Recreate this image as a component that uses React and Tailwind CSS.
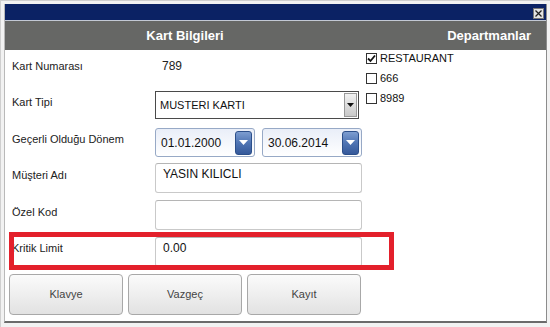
const departments = [
  { name: 'RESTAURANT', checked: true },
  { name: '666', checked: false },
  { name: '8989', checked: false },
];

const Label = ({ children }) => (
  <div className="w-[146px] pl-[3px] pt-[3px] text-[11px] leading-[16px] text-[#222]">{children}</div>
);

const TextBox = ({ value }) => (
  <div className="w-[207px] h-[30px] rounded-[3px] border border-[#c9c9c9] border-t-[#b5b5b5] bg-white pl-[7px] pt-[2px] text-[12px] leading-[16px] text-[#111]">
    {value}
  </div>
);

const DatePicker = ({ value }) => (
  <div className="w-[100px] h-[29px] rounded-[3px] border border-[#97a9c6] bg-gradient-to-b from-[#e9eef8] to-white flex items-center justify-between pl-[5px] pr-[2px]">
    <span className="text-[12px] text-[#111]">{value}</span>
    <div className="w-[17px] h-[24px] rounded-[3px] border border-[#2c4f8a] bg-gradient-to-b from-[#7d9dd0] via-[#4f74b3] to-[#35599a] flex items-center justify-center">
      <svg width="9" height="6" viewBox="0 0 9 6">
        <path d="M0 0 L9 0 L4.5 5 Z" fill="#ffffff" />
      </svg>
    </div>
  </div>
);

const Checkbox = ({ checked }) => (
  <div className="w-[11px] h-[11px] border border-[#333] bg-white flex items-center justify-center">
    {checked && (
      <svg width="9" height="9" viewBox="0 0 9 9">
        <path d="M1 4.5 L3.5 7 L8 1.5" stroke="#111" strokeWidth="1.8" fill="none" />
      </svg>
    )}
  </div>
);

const Button = ({ children }) => (
  <button className="w-[114px] h-[41px] rounded-[4px] border border-[#a8a8a8] bg-gradient-to-b from-[#fbfbfb] to-[#e2e2e2] text-[11px] text-[#444]">
    {children}
  </button>
);

export default function App() {
  return (
    <div
      className="relative w-[550px] h-[327px] overflow-hidden bg-[#f2f2f2] border-t border-l border-[#cfcfcf] pl-[3px] pt-[3px]"
      style={{ fontFamily: '"Liberation Sans", Arial, sans-serif' }}
    >
      <div className="w-[543px] h-[319px] flex flex-col border-l border-[#b9b9b9] border-r border-r-[#8c8c8c] border-b-2 border-b-[#6b6b6b] bg-white">
        <div className="h-[16px] bg-[#0b2264] flex items-center justify-end pr-[2px]">
          <div className="w-[11px] h-[11px] mt-[2px] bg-[#e4e4e4] border border-[#777] flex items-center justify-center">
            <svg width="7" height="7" viewBox="0 0 7 7">
              <path d="M0.5 0.5 L6.5 6.5 M6.5 0.5 L0.5 6.5" stroke="#222" strokeWidth="1.3" />
            </svg>
          </div>
        </div>
        <div className="h-px bg-[#c2c8d4]" />
        <div className="h-[29px] bg-[#666765] flex items-center text-white font-bold text-[13px]">
          <div className="w-[360px] text-center">Kart Bilgileri</div>
          <div className="flex-1 text-right pr-[15px]">Departmanlar</div>
        </div>

        <div className="flex-1 flex">
          <div className="w-[360px] pl-[4px]">
            <div className="flex items-center h-[20px] mt-[6px]">
              <div className="w-[146px] pl-[3px] text-[11px] text-[#222]">Kart Numarası</div>
              <span className="pl-[7px] text-[12px] text-[#222]">789</span>
            </div>

            <div className="flex mt-[15px]">
              <Label>Kart Tipi</Label>
              <div className="w-[204px] h-[28px] border border-[#4a4a4a] bg-white flex items-center justify-between pl-[4px] pr-[1px]">
                <span className="text-[11px] text-[#111]">MUSTERI KARTI</span>
                <div className="w-[13px] h-[24px] border border-[#9a9a9a] bg-gradient-to-b from-[#f2f2f2] to-[#c9c9c9] flex items-center justify-center">
                  <svg width="7" height="4" viewBox="0 0 7 4">
                    <path d="M0 0 L7 0 L3.5 4 Z" fill="#111" />
                  </svg>
                </div>
              </div>
            </div>

            <div className="flex mt-[9px]">
              <Label>Geçerli Olduğu Dönem</Label>
              <div className="flex gap-[7px]">
                <DatePicker value="01.01.2000" />
                <DatePicker value="30.06.2014" />
              </div>
            </div>

            <div className="flex mt-[6px]">
              <div className="w-[146px] pl-[3px] pt-[4px] text-[11px] leading-[16px] text-[#222]">Müşteri Adı</div>
              <TextBox value="YASIN KILICLI" />
            </div>

            <div className="flex mt-[7px]">
              <div className="w-[146px] pl-[3px] pt-[4px] text-[11px] leading-[16px] text-[#222]">Özel Kod</div>
              <TextBox value="" />
            </div>

            <div className="flex mt-[7px]">
              <Label>Kritik Limit</Label>
              <TextBox value="0.00" />
            </div>

            <div className="flex gap-[5px] mt-[7px]">
              <Button>Klavye</Button>
              <Button>Vazgeç</Button>
              <Button>Kayıt</Button>
            </div>
          </div>

          <div className="flex-1 pl-px pt-[2px] flex flex-col gap-[8px]">
            {departments.map((d) => (
              <div key={d.name} className="flex items-center h-[12px] gap-[3px]">
                <Checkbox checked={d.checked} />
                <span className="text-[11px] text-[#111]">{d.name}</span>
              </div>
            ))}
          </div>
        </div>
      </div>

      {/* red highlight around Kritik Limit */}
      <div className="absolute left-[8px] top-[231px] w-[385px] h-[38px] border-[5px] border-[#e3202b]" />
    </div>
  );
}
